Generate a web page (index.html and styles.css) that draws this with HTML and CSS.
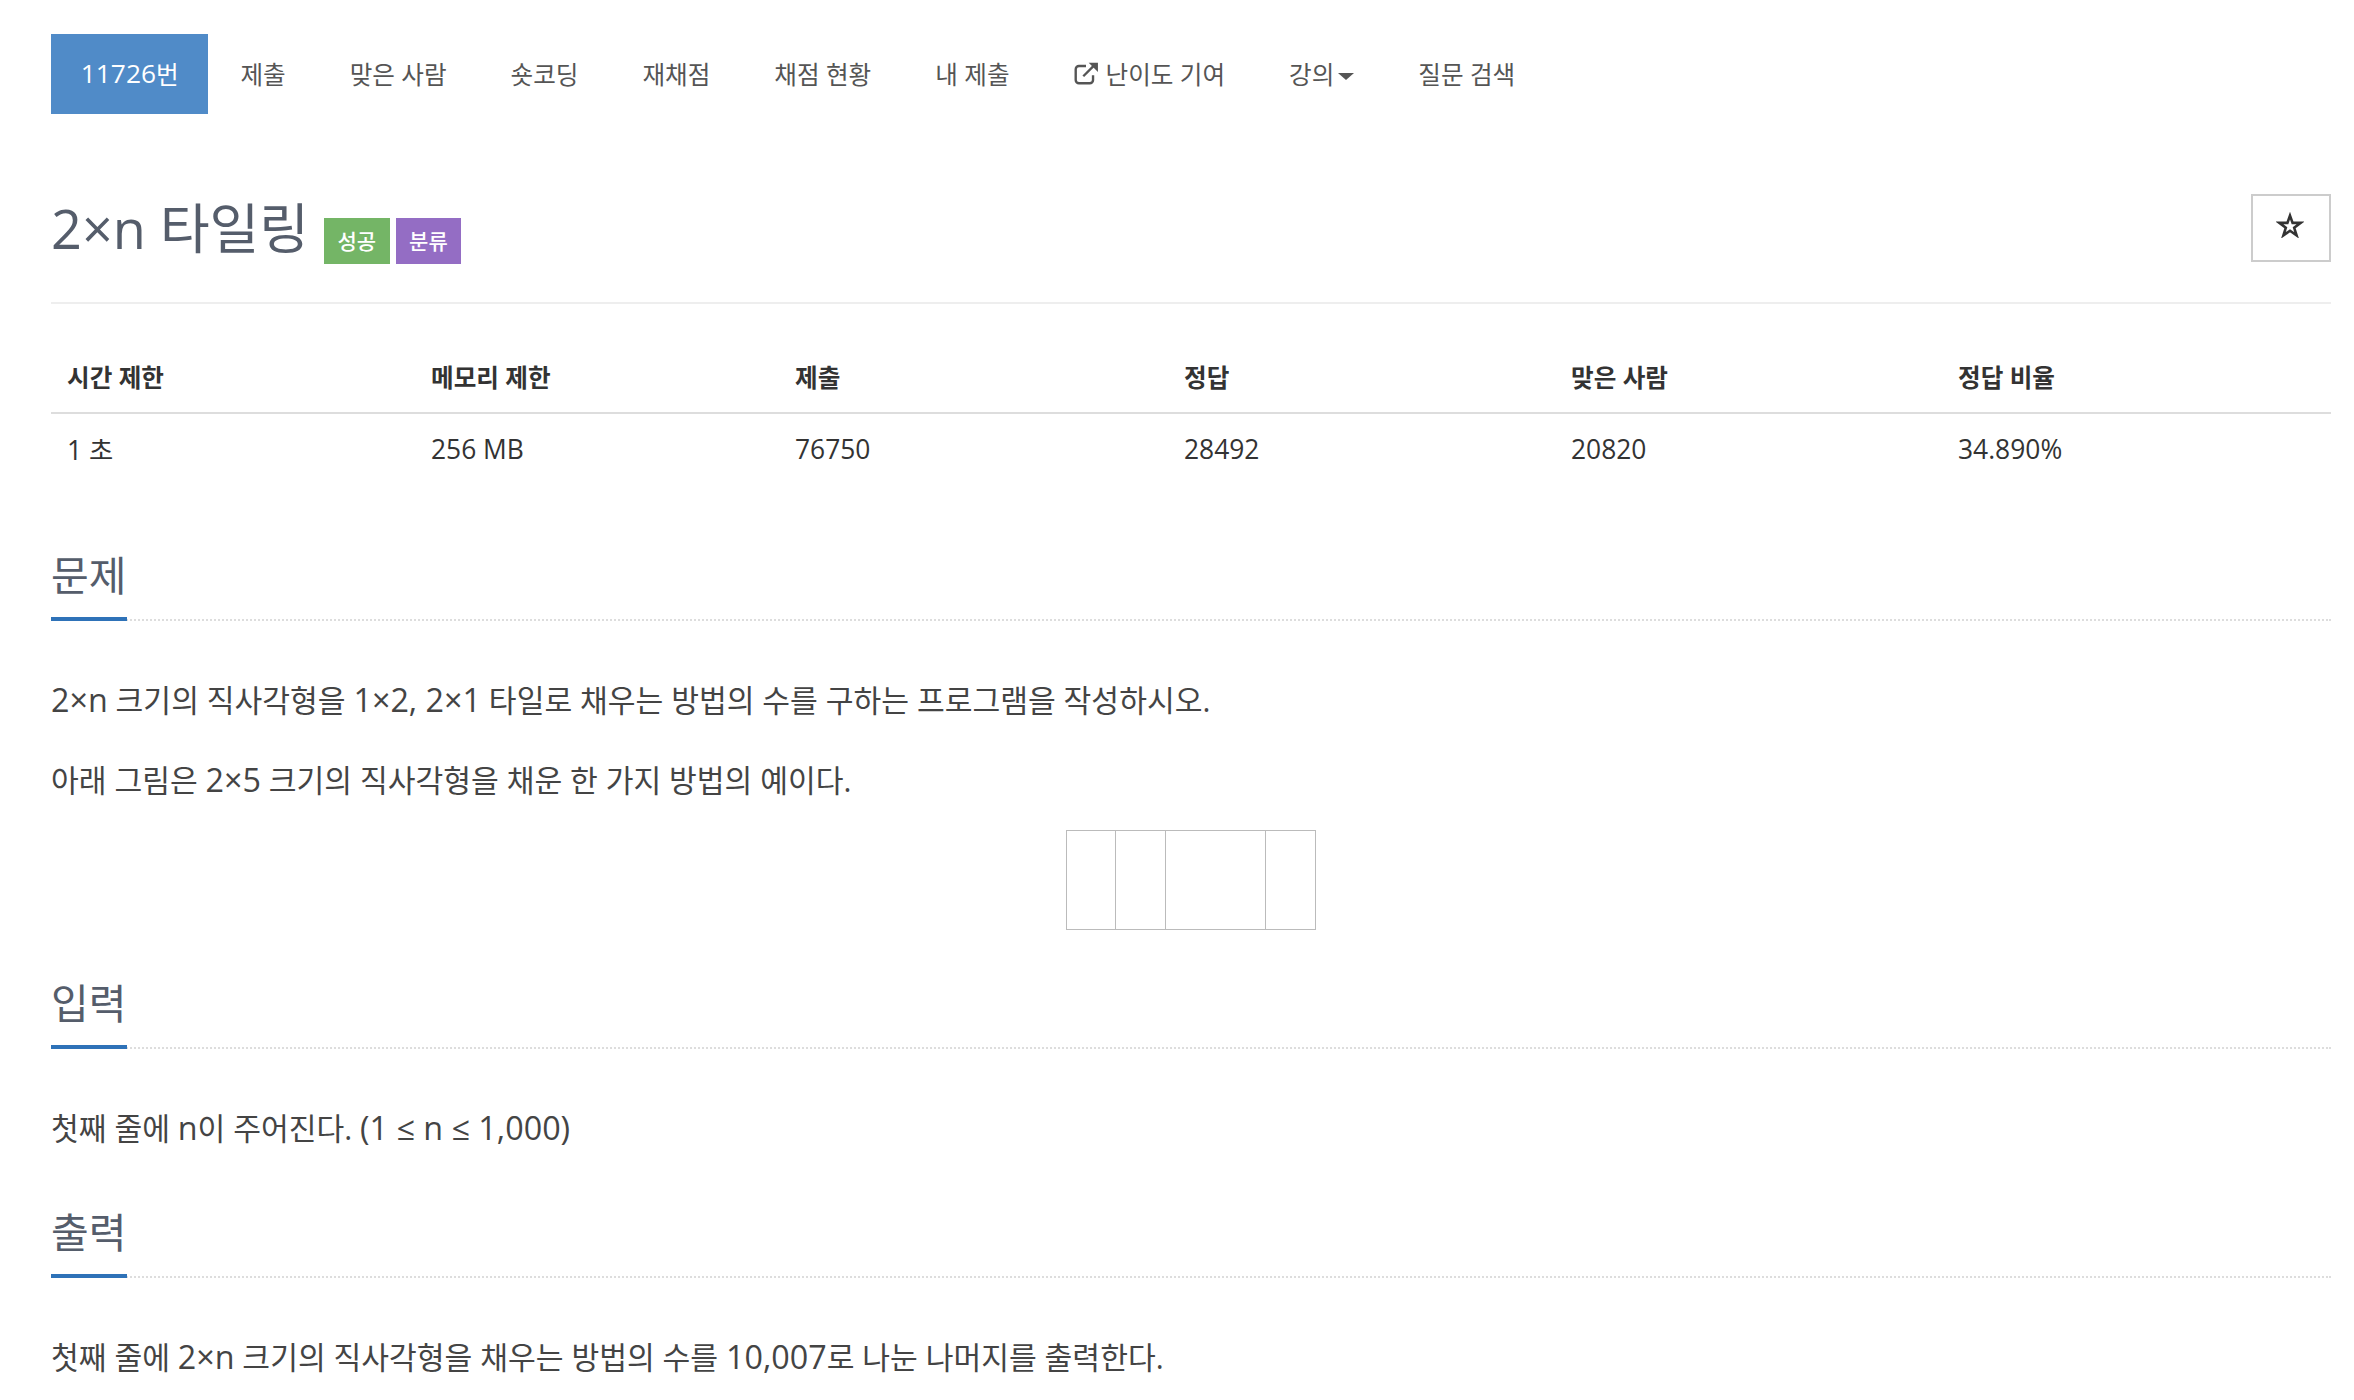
FILE: index.html
```html
<!DOCTYPE html>
<html lang="ko">
<head>
  <meta charset="UTF-8">
  <title>2×n 타일링</title>
  <link rel="stylesheet" href="styles.css">
</head>
<body>
  <div class="container">
    <ul class="nav">
      <li class="active"><a><span class="en">11726</span>번</a></li>
      <li><a>제출</a></li>
      <li><a>맞은 사람</a></li>
      <li><a>숏코딩</a></li>
      <li><a>재채점</a></li>
      <li><a>채점 현황</a></li>
      <li><a>내 제출</a></li>
      <li><a>
        <svg class="ext-icon" viewBox="0 0 24 24" width="26" height="26" fill="none" stroke="#555" stroke-width="2.2">
          <path d="M12 5.5H5.5a3 3 0 0 0-3 3v10a3 3 0 0 0 3 3h10a3 3 0 0 0 3-3V14"/>
          <path d="M9.5 15L20 4.5"/>
          <path d="M14.5 2.5H23V11z" fill="#555" stroke="none"/>
        </svg>
        난이도 기여</a></li>
      <li><a>강의<span class="caret"></span></a></li>
      <li><a>질문 검색</a></li>
    </ul>

    <div class="page-header">
      <h1>2×n 타일링</h1>
      <span class="label green">성공</span>
      <span class="label purple">분류</span>
      <button class="star-btn" type="button">
        <svg viewBox="0 0 28 26" width="28" height="26" fill="none" stroke="#333" stroke-width="2.6" stroke-linejoin="miter">
          <path d="M14 3.6l2.6 7.3h8l-6.4 4.9 2.4 7.6-6.6-4.6-6.6 4.6 2.4-7.6-6.4-4.9h8z"/>
        </svg>
      </button>
    </div>

    <table class="info-table">
      <thead>
        <tr>
          <th>시간 제한</th>
          <th>메모리 제한</th>
          <th>제출</th>
          <th>정답</th>
          <th>맞은 사람</th>
          <th>정답 비율</th>
        </tr>
      </thead>
      <tbody>
        <tr>
          <td>1 초</td>
          <td>256 MB</td>
          <td>76750</td>
          <td>28492</td>
          <td>20820</td>
          <td>34.890%</td>
        </tr>
      </tbody>
    </table>

    <section class="problem-section">
      <div class="headline"><h2>문제</h2></div>
      <p><span class="en">2×n</span> 크기의 직사각형을 <span class="en">1×2, 2×1</span> 타일로 채우는 방법의 수를 구하는 프로그램을 작성하시오.</p>
      <p>아래 그림은 <span class="en">2×5</span> 크기의 직사각형을 채운 한 가지 방법의 예이다.</p>
      <div class="figure">
        <div class="tile"></div>
        <div class="tile"></div>
        <div class="tile wide"></div>
        <div class="tile"></div>
      </div>
    </section>

    <section class="problem-section">
      <div class="headline"><h2>입력</h2></div>
      <p>첫째 줄에 <span class="en">n</span>이 주어진다. <span class="en">(1 ≤ n ≤ 1,000)</span></p>
    </section>

    <section class="problem-section">
      <div class="headline"><h2>출력</h2></div>
      <p>첫째 줄에 <span class="en">2×n</span> 크기의 직사각형을 채우는 방법의 수를 <span class="en">10,007</span>로 나눈 나머지를 출력한다.</p>
    </section>
  </div>
</body>
</html>
```

FILE: styles.css
```css
html, body {
  height: 1400px;
  overflow: hidden;
}
body {
  margin: 0;
  padding: 0;
  background: #fff;
  color: #333;
  font-family: "Open Sans", "Noto Sans CJK KR", sans-serif;
  font-size: 24.6px;
}
.container {
  margin: 0 23px 0 51px;
  padding-top: 34px;
}
.en {
  font-size: 1.07em;
}

.nav {
  display: flex;
  list-style: none;
  margin: 0;
  padding: 0;
}
.nav a {
  display: flex;
  align-items: center;
  height: 78px;
  padding: 0 32px 2px;
  color: #555;
}
.nav .active a {
  padding: 0 29.75px 2px;
  background: #508bc8;
  color: #fff;
}
.ext-icon {
  margin-left: -1px;
  margin-right: 7px;
}
.caret {
  display: inline-block;
  margin-left: 4px;
  margin-top: 6px;
  border-top: 7px solid #555;
  border-left: 8px solid transparent;
  border-right: 8px solid transparent;
}

.page-header {
  display: flex;
  align-items: flex-start;
  height: 108px;
  margin-top: 80px;
  border-bottom: 2px solid #eee;
}
.page-header h1 {
  margin: -2px 15px 0 0;
  color: #555d6b;
  font-size: 54px;
  font-weight: 400;
  line-height: 72px;
}
.label {
  margin-top: 24px;
  margin-right: 6px;
  padding: 0 13.5px;
  color: #fff;
  font-size: 21px;
  font-weight: 500;
  line-height: 46px;
}
.green {
  background: #74b566;
}
.purple {
  background: #946dc4;
}
.star-btn {
  display: flex;
  align-items: center;
  justify-content: center;
  width: 80px;
  height: 68px;
  margin-left: auto;
  padding: 0 2px 6px 0;
  background: #fff;
  border: 2px solid #ccc;
  border-radius: 0;
}

.info-table {
  width: 100%;
  margin: 32px 0 64px;
  border-collapse: collapse;
  table-layout: fixed;
}
.info-table th,
.info-table td {
  box-sizing: border-box;
  padding: 0 16px;
  text-align: left;
}
.info-table th {
  height: 77px;
  padding-top: 3px;
  border-bottom: 2px solid #ddd;
  font-weight: 700;
}
.info-table td {
  height: 70px;
  font-size: 26.4px;
}
.info-table th:nth-child(1),
.info-table th:nth-child(2) {
  width: 364px;
}
.info-table th:nth-child(3) {
  width: 389px;
}
.info-table th:nth-child(4),
.info-table th:nth-child(5) {
  width: 387px;
}

.problem-section {
  margin-top: 45px;
}
.headline {
  margin-bottom: 58px;
  border-bottom: 2px dotted #ddd;
}
.headline h2 {
  display: inline-block;
  margin: 0 0 -2px;
  padding: 0 1px 14px 0;
  border-bottom: 4px solid #2e72b8;
  color: #555d6b;
  font-size: 41px;
  font-weight: 400;
  line-height: 56px;
}
.problem-section p {
  margin: 38px 0 0;
  color: #444;
  font-size: 30.2px;
  line-height: 40px;
}
.problem-section .headline + p {
  margin-top: 0;
}
.problem-section p:last-child {
  margin-bottom: 55px;
}
.figure {
  display: flex;
  justify-content: center;
  margin-top: 29px;
}
.tile {
  box-sizing: border-box;
  width: 51px;
  height: 100px;
  margin-left: -1px;
  border: 1px solid #bbb;
}
.tile:first-child {
  width: 50px;
  margin-left: 0;
}
.tile.wide {
  width: 101px;
}
```
